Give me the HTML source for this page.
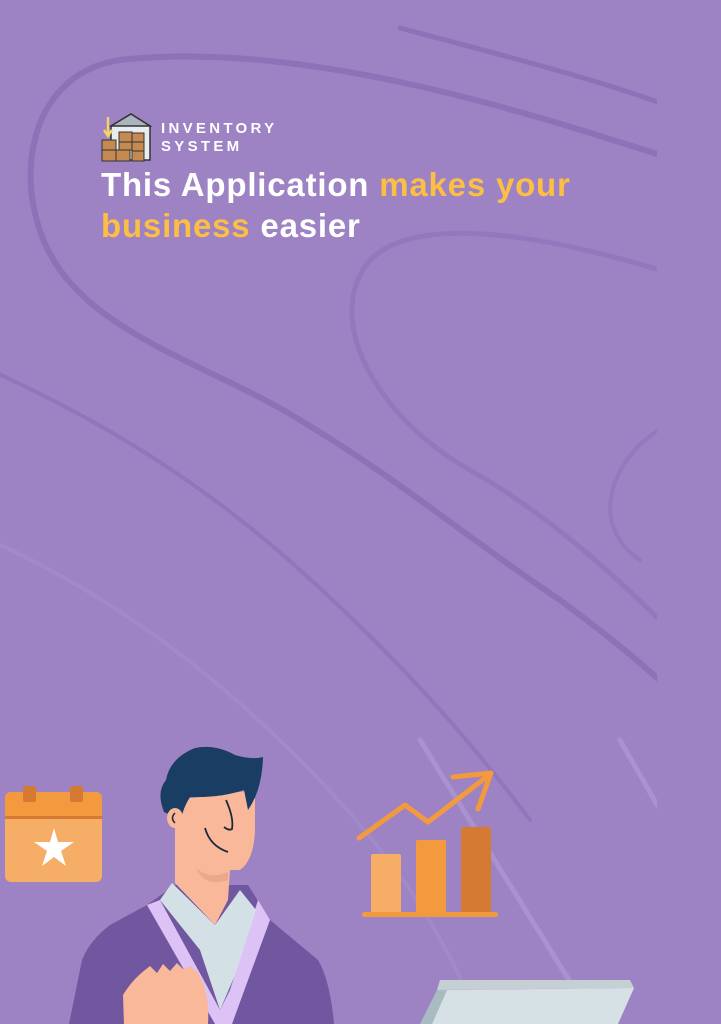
<!DOCTYPE html>
<html><head><meta charset="utf-8"><style>
html,body{margin:0;padding:0;}
body{width:721px;height:1024px;overflow:hidden;background:#9d82c4;position:relative;font-family:"Liberation Sans",sans-serif;}
svg{position:absolute;left:0;top:0;}
.brand{position:absolute;left:161px;top:120px;color:#fff;font-weight:700;font-size:15px;letter-spacing:3.3px;line-height:18px;}
.title{position:absolute;left:101px;top:164px;color:#fff;font-weight:700;font-size:33px;line-height:41px;letter-spacing:0.8px;}
.y{color:#fbbf45;}
</style></head><body>
<svg width="721" height="1024" viewBox="0 0 721 1024">
<defs><clipPath id="c"><rect x="0" y="0" width="657" height="1024"/></clipPath></defs>
<g clip-path="url(#c)" fill="none" stroke-linecap="round">
<path d="M400 28 C520 60 600 80 680 110" stroke="#8d72b8" stroke-width="5"/>
<path d="M660 155 C520 110 300 40 120 60 C20 75 10 200 60 270 C110 340 220 370 300 420 C400 480 470 540 560 600 C600 630 640 660 680 700" stroke="#8d72b8" stroke-width="6"/>
<path d="M660 270 C560 240 420 210 370 260 C320 320 380 420 470 470 C540 510 600 560 680 640" stroke="#9378bd" stroke-width="5"/>
<path d="M680 420 C620 440 580 520 640 560" stroke="#9579be" stroke-width="4"/>
<path d="M-10 370 C100 420 200 480 300 570 C400 660 470 740 530 820" stroke="#9276bc" stroke-width="4"/>
<path d="M-10 540 C100 590 200 660 300 760 C380 840 440 920 480 1024" stroke="#a08ac8" stroke-width="4"/>
<path d="M420 740 L600 1030" stroke="#a893cf" stroke-width="5"/>
<path d="M620 740 L660 810" stroke="#a893cf" stroke-width="5"/>
</g>
<g>
<path d="M111 126 L131 114 L150 126 L150 160 L111 160Z" fill="#e8ecef" stroke="#333" stroke-width="1.5"/>
<path d="M111 126 L131 114 L150 126Z" fill="#a9b4bc" stroke="#333" stroke-width="1.5"/>
<rect x="102" y="140" width="14" height="10" fill="#c48a52" stroke="#333"/>
<rect x="102" y="150" width="14" height="11" fill="#c48a52" stroke="#333"/>
<rect x="116" y="150" width="14" height="11" fill="#c48a52" stroke="#333"/>
<rect x="119" y="132" width="13" height="10" fill="#c48a52" stroke="#333"/>
<rect x="132" y="133" width="12" height="9" fill="#c48a52" stroke="#333"/>
<rect x="132" y="142" width="12" height="9" fill="#c48a52" stroke="#333"/>
<rect x="132" y="151" width="12" height="10" fill="#c48a52" stroke="#333"/>
<rect x="119" y="142" width="13" height="8" fill="#c48a52" stroke="#333"/>
<path d="M108 117 L108 134 M104 130 L108 136 L112 130" stroke="#f3d36a" stroke-width="2.5" fill="none"/>
</g>
<rect x="5" y="792" width="97" height="90" rx="6" fill="#f6ad66"/>
<path d="M11 792 h85 a6 6 0 0 1 6 6 v19 h-97 v-19 a6 6 0 0 1 6 -6z" fill="#f39a3e"/>
<rect x="5" y="816" width="97" height="3" fill="#d47a33"/>
<rect x="23" y="786" width="13" height="16" rx="2" fill="#d47a33"/>
<rect x="70" y="786" width="13" height="16" rx="2" fill="#d47a33"/>
<path d="M54 828 L58 842 L74 842 L61 851 L66 866 L54 857 L42 866 L47 851 L34 842 L50 842Z" fill="#fff"/>
<rect x="371" y="854" width="30" height="60" rx="2" fill="#f6ad66"/>
<rect x="416" y="840" width="30" height="74" rx="2" fill="#f39a3e"/>
<rect x="461" y="827" width="30" height="87" rx="2" fill="#d47a33"/>
<rect x="362" y="912" width="136" height="5" rx="2.5" fill="#f39a3e"/>
<path d="M359 838 L405 805 L428 822 L489 775 M453 777 L491 773 L478 809" stroke="#f39a3e" stroke-width="5" fill="none" stroke-linecap="round" stroke-linejoin="round"/>
<path d="M69 1024 L82 960 Q90 940 110 925 L147 905 L175 885 L248 885 L270 920 L318 960 Q330 980 334 1024Z" fill="#7157a0"/>
<path d="M147 905 L160 900 L220 1010 L230 990 L258 900 L270 920 L232 1024 L215 1024Z" fill="#dcc2f5"/>
<path d="M172 883 L215 925 L240 890 L256 910 L235 975 L220 1010 L200 950 L160 900Z" fill="#d3e1e6"/>
<path d="M175 800 L175 883 L215 925 L228 900 L230 870 L240 870 Q254 860 255 830 L255 790 Z" fill="#f9b89a"/>
<path d="M196 868 Q210 880 228 872 L228 880 Q205 888 196 868Z" fill="#eca88a"/>
<path d="M164 812 Q156 792 166 780 Q170 758 195 748 Q215 744 235 755 Q252 760 263 757 Q262 790 248 810 L244 790 Q220 798 190 797 Q183 808 181 820 Z" fill="#1a3d63"/>
<ellipse cx="175" cy="818" rx="8" ry="10" fill="#f9b89a"/>
<path d="M175 813 Q170 818 175 823" stroke="#1a2a3a" stroke-width="1.5" fill="none"/>
<path d="M226 800 Q234 818 232 829 Q229 831 224 827" stroke="#1a2a3a" stroke-width="1.8" fill="none"/>
<path d="M205 828 Q210 846 228 852" stroke="#1a2a3a" stroke-width="1.8" fill="none"/>
<path d="M124 1024 L123 995 Q132 980 145 970 L150 966 L157 973 L163 964 L170 971 L177 963 L183 969 L190 966 L197 972 Q210 990 208 1024Z" fill="#f9b89a"/>
<path d="M440 980 L630 980 L634 988 L437 990Z" fill="#c6d0d3"/>
<path d="M437 990 L447 990 L432 1024 L420 1024Z" fill="#a8bbc0"/>
<path d="M447 990 L634 988 L618 1024 L432 1024Z" fill="#d6e1e6"/>
</svg>
<div class="brand">INVENTORY<br>SYSTEM</div>
<div class="title">This Application <span class="y">makes your</span><br><span class="y">business</span> easier</div>
</body></html>
